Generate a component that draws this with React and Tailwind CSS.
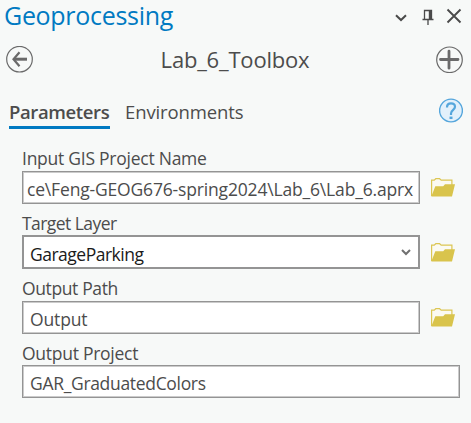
import React from "react";

function FolderIcon() {
  return (
    <svg width="24" height="19" viewBox="0 0 24 19" className="shrink-0" aria-hidden="true">
      <path d="M0.6 18V2.1H3.2L4.8 0.7H8.6L10.2 2.1H20.9V8" fill="#fbfaf2" stroke="#dcc653" strokeWidth="1.2" />
      <path d="M0.3 18.5L4.3 8.2H12.2L14 6.2H24L21 18.5Z" fill="#d9c44c" />
    </svg>
  );
}

function Label({ className, children }) {
  return (
    <div className={`whitespace-nowrap text-[17.5px] leading-[23px] text-[#4c4c4c] ${className}`}>{children}</div>
  );
}

function Box({ className, children }) {
  return (
    <div className={`flex h-[33px] items-center whitespace-nowrap border border-[#949494] bg-white pt-[3px] text-[17.5px] leading-[22px] text-[#4c4c4c] shadow-[inset_0_0_0_1px_#cbcbcb] ${className}`}>
      {children}
    </div>
  );
}

export default function App() {
  return (
    <div className="h-[423px] w-[471px] overflow-hidden bg-[#f7f9f8] font-['Open_Sans','Noto_Sans',sans-serif] text-[#4c4c4c]">
      <header className="flex h-[31px] items-center justify-between pl-1 pr-[9px]">
        <h1 className="text-[25px] leading-[31px] tracking-[-0.3px] text-[#007ac2]">Geoprocessing</h1>
        <svg width="68" height="18" viewBox="0 0 68 18" fill="none" stroke="#4a4a4a" aria-hidden="true">
          <path d="M2 8.2L7 13L12 8.2" strokeWidth="2" />
          <path d="M30.5 12.5V3.5H37.5V12.5M28.5 12.5H39.5M34 13V18" strokeWidth="1.3" />
          <path d="M36.3 3V12" strokeWidth="3" />
          <path d="M53.5 2.5L66.5 15.5M66.5 2.5L53.5 15.5" strokeWidth="1.9" />
        </svg>
      </header>

      <div className="flex h-[57px] items-center justify-between pl-[6px] pr-[8px]">
        <svg width="27" height="27" viewBox="0 0 27 27" fill="none" stroke="#6a6a6a" aria-hidden="true">
          <circle cx="13.5" cy="13.2" r="12.8" strokeWidth="1.2" />
          <path d="M21 13.2H8" strokeWidth="3" />
          <path d="M13.5 6.2L7.5 13.2L13.5 20.2" strokeWidth="2.2" />
        </svg>
        <h2 className="-mt-px pl-px text-[22px] leading-[30px] tracking-[-0.2px]">Lab_6_Toolbox</h2>
        <svg width="27" height="27" viewBox="0 0 27 27" fill="none" stroke="#6a6a6a" aria-hidden="true">
          <circle cx="13.5" cy="13.8" r="12.8" strokeWidth="1.2" />
          <path d="M13 5.2V22.2M4.5 13.5H22" strokeWidth="2.8" strokeLinecap="round" />
        </svg>
      </div>

      <nav className="flex h-[59px] justify-between pl-[9px] pr-[8px] pt-[10px]">
        <div className="flex gap-4">
          <div className="h-[31px] w-[101px] whitespace-nowrap border-b-[3px] border-[#007ac2] text-[18.5px] font-semibold leading-[28px] tracking-[-0.38px]">Parameters</div>
          <div className="-ml-px whitespace-nowrap text-[18.5px] leading-[28px] tracking-[-0.12px]">Environments</div>
        </div>
        <svg width="24" height="25" viewBox="0 0 24 25" fill="none" stroke="#55a6dc" aria-hidden="true">
          <circle cx="12" cy="12.5" r="11.4" fill="#e2f0fb" strokeWidth="1.4" />
          <path d="M8 9.4C8 6.7 9.7 5.4 12 5.4C14.5 5.4 16 6.8 16 8.8C16 11.8 12 11.9 12 15.5V17" strokeWidth="2.2" />
          <path d="M12 18.6V21" strokeWidth="3" />
        </svg>
      </nav>

      <main className="flex flex-col gap-2 pl-[22px]">
        <section>
          <Label className="h-[24px] tracking-[-0.25px]">Input GIS Project Name</Label>
          <div className="flex items-center gap-[11px]">
            <Box className="w-[398px] pl-1 tracking-[-0.17px]">ce\Feng-GEOG676-spring2024\Lab_6\Lab_6.aprx</Box>
            <FolderIcon />
          </div>
        </section>
        <section>
          <Label className="h-[23px] tracking-[-0.55px]">Target Layer</Label>
          <div className="flex items-center gap-[11px]">
            <div className="flex h-[34px] w-[398px] items-center justify-between border-2 border-[#949494] bg-white pl-[6px] pr-[7px] text-[17.5px] leading-[22px] tracking-[-0.5px] text-[#1a1a1a]">
              <span className="pt-[3px]">GarageParking</span>
              <svg width="10" height="8" viewBox="0 0 10 8" fill="none" stroke="#707070" aria-hidden="true">
                <path d="M1 2L5 6L9 2" strokeWidth="2" />
              </svg>
            </div>
            <FolderIcon />
          </div>
        </section>
        <section>
          <Label className="h-[24px] tracking-[-0.38px]">Output Path</Label>
          <div className="flex items-center gap-[11px]">
            <Box className="w-[398px] pl-[7px] tracking-[-0.15px]">Output</Box>
            <FolderIcon />
          </div>
        </section>
        <section>
          <Label className="h-[23px] tracking-[-0.27px]">Output Project</Label>
          <Box className="w-[438px] pl-[7px] tracking-[-0.32px]">GAR_GraduatedColors</Box>
        </section>
      </main>
    </div>
  );
}
